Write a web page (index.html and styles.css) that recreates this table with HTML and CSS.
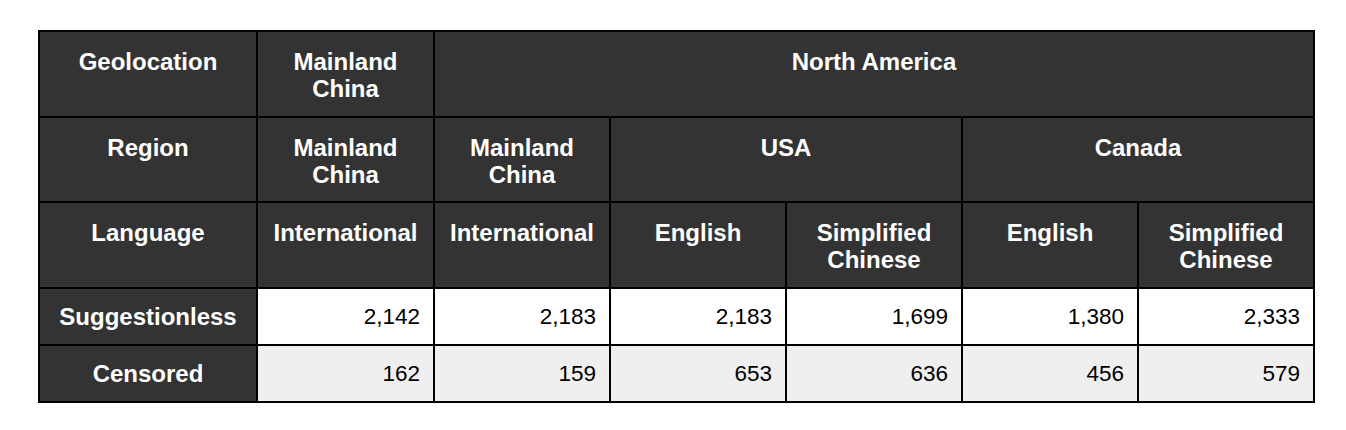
FILE: index.html
```html
<!DOCTYPE html>
<html lang="en">
<head>
<meta charset="utf-8">
<title>Query counts by geolocation</title>
<link rel="stylesheet" href="styles.css">
</head>
<body>
<table class="grid">
  <colgroup>
    <col class="c-label">
    <col class="c-first">
    <col class="c-data">
    <col class="c-data">
    <col class="c-data">
    <col class="c-data">
    <col class="c-data">
  </colgroup>
  <tr class="r-head">
    <th class="hd">Geolocation</th>
    <th class="hd">Mainland<br>China</th>
    <th class="hd" colspan="5">North America</th>
  </tr>
  <tr class="r-head r-mid">
    <th class="hd">Region</th>
    <th class="hd">Mainland<br>China</th>
    <th class="hd">Mainland<br>China</th>
    <th class="hd" colspan="2">USA</th>
    <th class="hd" colspan="2">Canada</th>
  </tr>
  <tr class="r-head r-lang">
    <th class="hd">Language</th>
    <th class="hd">International</th>
    <th class="hd">International</th>
    <th class="hd">English</th>
    <th class="hd">Simplified<br>Chinese</th>
    <th class="hd">English</th>
    <th class="hd">Simplified<br>Chinese</th>
  </tr>
  <tr class="r-data r-white">
    <th class="lbl">Suggestionless</th>
    <td class="num">2,142</td>
    <td class="num">2,183</td>
    <td class="num">2,183</td>
    <td class="num">1,699</td>
    <td class="num">1,380</td>
    <td class="num">2,333</td>
  </tr>
  <tr class="r-data r-gray r-last">
    <th class="lbl">Censored</th>
    <td class="num">162</td>
    <td class="num">159</td>
    <td class="num">653</td>
    <td class="num">636</td>
    <td class="num">456</td>
    <td class="num">579</td>
  </tr>
</table>
</body>
</html>
```

FILE: styles.css
```css
html, body {
  margin: 0;
  padding: 0;
  background: #ffffff;
}

body {
  padding: 30px 0 0 38px;
  font-family: "Liberation Sans", Arial, Helvetica, sans-serif;
}

.grid {
  border-collapse: collapse;
  table-layout: fixed;
  width: 1277px;
}

.c-label { width: 218px; }
.c-first { width: 177px; }
.c-data { width: 176px; }

.grid .hd,
.grid .lbl,
.grid .num {
  border: 2px solid #000000;
  padding: 0;
}

.r-head { height: 86px; }
.r-mid { height: 85px; }
.r-lang { height: 86px; }
.r-data { height: 57px; }

.grid .hd {
  background: #333333;
  color: #ffffff;
  font-weight: bold;
  font-size: 24px;
  line-height: 27px;
  text-align: center;
  vertical-align: top;
  padding-top: 16px;
}

.grid .lbl {
  background: #333333;
  color: #ffffff;
  font-weight: bold;
  font-size: 24px;
  text-align: center;
  vertical-align: middle;
}

.grid .num {
  color: #000000;
  font-size: 22.5px;
  text-align: right;
  vertical-align: middle;
  padding-right: 13px;
}

.r-white .num { background: #ffffff; }
.r-gray .num { background: #efefef; }
```
